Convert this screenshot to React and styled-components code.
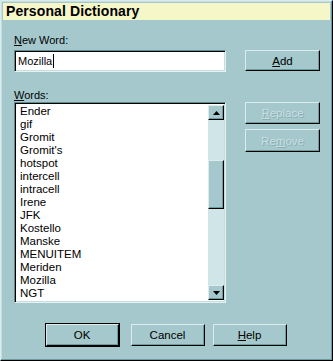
import React from 'react';
import styled, { createGlobalStyle } from 'styled-components';

const GlobalStyle = createGlobalStyle`
  html, body {
    margin: 0;
    padding: 0;
    background: #a4c8cc;
  }
  * {
    box-sizing: border-box;
  }
`;

const Window = styled.div`
  width: 333px;
  height: 361px;
  background: #a4c8cc;
  border: 1px solid;
  border-color: #dcecee #000 #000 #dcecee;
  box-shadow: inset -1px -1px 0 #6b9aa0, inset 1px 1px 0 #c4dee1;
  font-family: "Liberation Sans", Arial, sans-serif;
  font-size: 11px;
  color: #000;
  display: flex;
  flex-direction: column;
`;

const TitleBar = styled.div`
  margin: 2px 2px 0 2px;
  height: 17px;
  background: #f6f7c9;
  font-size: 14px;
  font-weight: bold;
  line-height: 17px;
  padding-left: 3px;
  letter-spacing: 0.1px;
`;

const Body = styled.div`
  display: flex;
  padding-left: 13px;
  column-gap: 19px;
`;

const LeftColumn = styled.div`
  display: flex;
  flex-direction: column;
  width: 212px;
`;

const RightColumn = styled.div`
  display: flex;
  flex-direction: column;
  width: 75px;
  padding-top: 30px;
`;

const Label = styled.div`
  height: ${p => p.$h || 14}px;
  margin-top: ${p => p.$mt || 0}px;
  line-height: 14px;
`;

const Key = styled.span`
  text-decoration: underline;
  text-underline-offset: 1px;
`;

const TextField = styled.div`
  height: 22px;
  background: #fff;
  border: 1px solid;
  border-color: #5c8b90 #e6f1f2 #e6f1f2 #5c8b90;
  box-shadow: inset 1px 1px 0 #000, inset -1px -1px 0 #c6dde0;
  padding: 3px 0 0 3px;
  font-size: 11px;
  line-height: 14px;
  display: flex;
`;

const Caret = styled.span`
  display: inline-block;
  width: 1px;
  height: 14px;
  background: #000;
  margin-left: 1px;
`;

const ListBox = styled.div`
  height: 201px;
  background: #fff;
  border: 1px solid;
  border-color: #5c8b90 #e6f1f2 #e6f1f2 #5c8b90;
  box-shadow: inset 1px 1px 0 #000, inset -1px -1px 0 #c6dde0;
  padding: 2px 1px 2px 2px;
  display: flex;
  overflow: hidden;
`;

const Items = styled.div`
  flex: 1;
  padding-left: 3px;
  overflow: hidden;
`;

const Item = styled.div`
  height: 13px;
  line-height: 13px;
  font-size: 11.5px;
  white-space: nowrap;
`;

const ScrollBar = styled.div`
  width: 16px;
  height: 100%;
  background: #d0e5e7;
  display: flex;
  flex-direction: column;
`;

const Raised = styled.div`
  background: #a4c8cc;
  border: 1px solid;
  border-color: #dcecee #000 #000 #dcecee;
  box-shadow: inset -1px -1px 0 #6b9aa0;
`;

const ArrowButton = styled(Raised)`
  height: 15px;
  display: flex;
  align-items: center;
  justify-content: center;
  flex-shrink: 0;
`;

const Thumb = styled(Raised)`
  height: 49px;
  margin-top: ${p => p.$top}px;
  margin-bottom: auto;
`;

const Button = styled.div`
  width: ${p => p.$w || 75}px;
  height: ${p => p.$h || 22}px;
  margin-top: ${p => p.$mt || 0}px;
  background: #a4c8cc;
  border: 1px solid;
  border-color: #dcecee #000 #000 #dcecee;
  box-shadow: inset -1px -1px 0 #6b9aa0;
  display: flex;
  align-items: center;
  justify-content: center;
  font-size: 11.5px;
  color: ${p => (p.$disabled ? '#c9dfe2' : '#000')};
  text-shadow: ${p => (p.$disabled ? '1px 1px 0 #88aeb2' : 'none')};
  outline: ${p => (p.$default ? '1px solid #000' : 'none')};
`;

const Footer = styled.div`
  display: flex;
  justify-content: center;
  margin-top: 21px;
  padding-right: 1px;
`;

const FooterGap = styled.div`
  width: ${p => p.$w}px;
`;

const Arrow = ({ down }) => (
  <svg width="7" height="4" viewBox="0 0 7 4">
    <polygon points={down ? '0,0 7,0 3.5,4' : '0,4 7,4 3.5,0'} fill="#000" />
  </svg>
);

const words = [
  'Ender', 'gif', 'Gromit', "Gromit's", 'hotspot', 'intercell', 'intracell',
  'Irene', 'JFK', 'Kostello', 'Manske', 'MENUITEM', 'Meriden', 'Mozilla',
  'NGT', 'Oldbell',
];

export default function App() {
  return (
    <>
      <GlobalStyle />
      <Window>
        <TitleBar>Personal Dictionary</TitleBar>
        <Body>
          <LeftColumn>
            <Label $mt={13} $h={17}><Key>N</Key>ew Word:</Label>
            <TextField>Mozilla<Caret /></TextField>
            <Label $mt={16}><Key>W</Key>ords:</Label>
            <ListBox>
              <Items>
                {words.map(w => <Item key={w}>{w}</Item>)}
              </Items>
              <ScrollBar>
                <ArrowButton><Arrow /></ArrowButton>
                <Thumb $top={40} />
                <ArrowButton><Arrow down /></ArrowButton>
              </ScrollBar>
            </ListBox>
          </LeftColumn>
          <RightColumn>
            <Button $h={21}><Key>A</Key>dd</Button>
            <Button $mt={31} $disabled><Key>R</Key>eplace</Button>
            <Button $mt={5} $h={23} $disabled>Re<Key>m</Key>ove</Button>
          </RightColumn>
        </Body>
        <Footer>
          <Button $w={73} $default>OK</Button>
          <FooterGap $w={12} />
          <Button $w={74}>Cancel</Button>
          <FooterGap $w={8} />
          <Button $w={74}><Key>H</Key>elp</Button>
        </Footer>
      </Window>
    </>
  );
}
